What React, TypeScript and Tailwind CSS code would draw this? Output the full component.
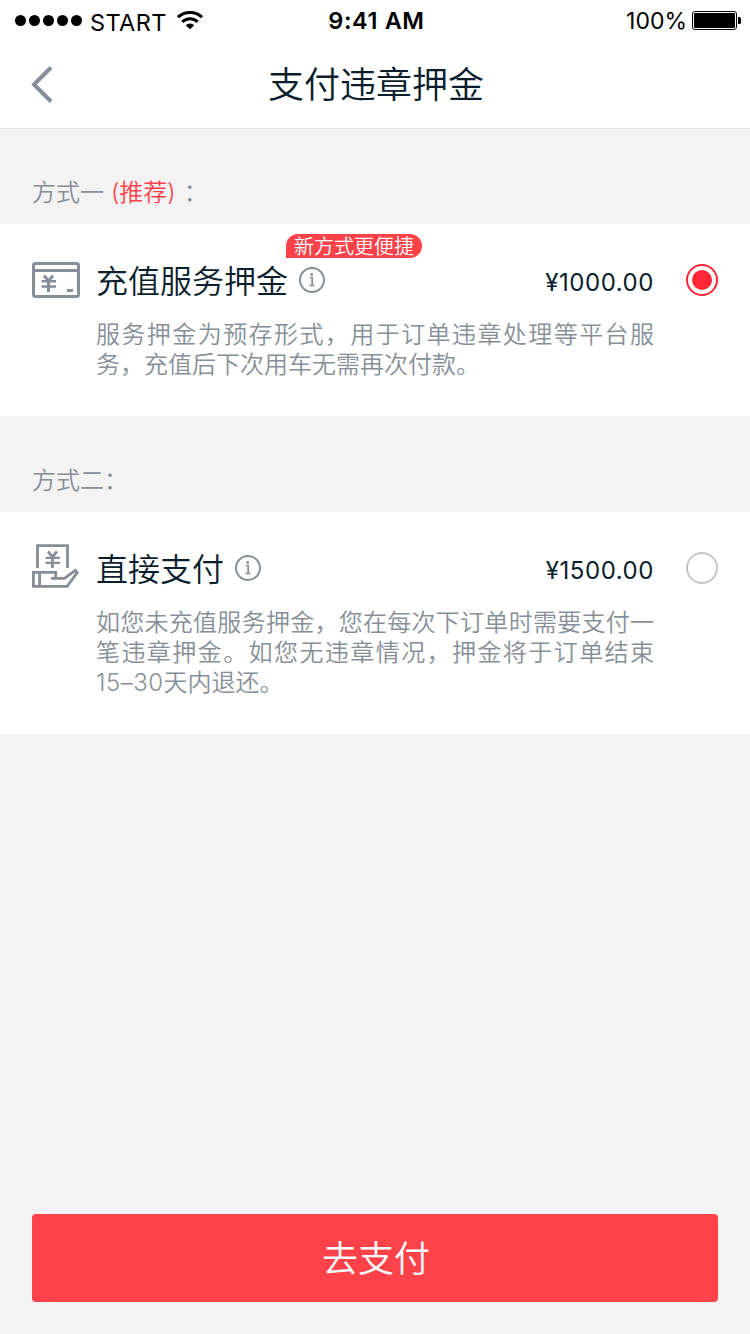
import type { ReactNode } from "react";

function StatusBar() {
  return (
    <div className="grid h-10 grid-cols-3 items-center text-2xl leading-6 text-black">
      <div className="flex items-center pl-[15px]">
        <svg width="67" height="11" viewBox="0 0 67 11" fill="currentColor">
          <circle cx="5.5" cy="5.5" r="5.5" />
          <circle cx="19.5" cy="5.5" r="5.5" />
          <circle cx="33.5" cy="5.5" r="5.5" />
          <circle cx="47.5" cy="5.5" r="5.5" />
          <circle cx="61.5" cy="5.5" r="5.5" />
        </svg>
        <span className="ml-2 w-[77px] pt-[6px] text-[23.5px] tracking-[0.4px]">START</span>
        <svg className="ml-[10px]" width="26" height="19" viewBox="0 0 26 19" fill="none" stroke="currentColor" strokeWidth="3">
          <path d="M1 6.2a17.500 17.500 0 0 1 24 0" />
          <path d="M5.300 10.900a11 11 0 0 1 15.400 0" />
          <path d="M8.700 14.200a6.200 6.200 0 0 1 8.600 0L13 18.300z" fill="currentColor" stroke="none" />
        </svg>
      </div>
      <div className="pt-px pl-[3px] text-center text-[23.5px] font-semibold tracking-[0.6px]">9:41 AM</div>
      <div className="flex items-center justify-end pr-[9px]">
        <span className="mr-[5px] pt-px text-[23px]">100%</span>
        <svg width="49" height="19" viewBox="0 0 49 19">
          <rect x="0.5" y="0.5" width="44" height="18" rx="2.5" fill="none" stroke="#000" />
          <rect x="2" y="2" width="41" height="15" rx="1" />
          <path d="M46 6h1.5q1.5 0 1.5 1.5v4q0 1.500-1.500 1.500H46z" />
        </svg>
      </div>
    </div>
  );
}

function CardIcon() {
  return (
    <svg width="48" height="48" viewBox="0 0 48 48" fill="none" stroke="#868f98" strokeWidth="3">
      <rect x="1.5" y="7.5" width="45" height="33" rx="2" />
      <path d="M2 14.500h44M16.500 25v11M35 34.500h6" />
      <path d="M12 19.500l4.500 5.500 4.500-5.500" />
      <path d="M9.500 25.300h14.500M9.500 30.500h14.500" strokeWidth="2.400" />
    </svg>
  );
}

function HandIcon() {
  return (
    <svg width="48" height="48" viewBox="0 0 48 48" fill="none" stroke="#868f98" strokeWidth="2.8">
      <path d="M5.500 24V1.700h30V24M20.500 14v10" />
      <path d="M16 7.500l4.500 5.500 4.500-5.500" />
      <path d="M13.500 13.800h14.500M13.500 18.900h14.500" strokeWidth="2.300" />
      <path d="M19 34.400h13.500L43.300 26.300 45.200 28.500 35.200 42.300H1.400V28.400h22.300v6M7.600 28.400v13.900" />
    </svg>
  );
}

function InfoIcon() {
  return (
    <svg className="ml-[11px] shrink-0" width="26" height="26" viewBox="0 0 26 26" fill="none" stroke="#868f98">
      <circle cx="13" cy="13" r="12" strokeWidth="2" />
      <path d="M10.800 10.500h2.400v8M10.500 18.500h5" strokeWidth="1.700" />
      <circle cx="12.700" cy="7.500" r="1.400" fill="#868f98" stroke="none" />
    </svg>
  );
}

type OptionProps = {
  icon: ReactNode;
  title: string;
  badge?: string;
  price: string;
  selected?: boolean;
  lines: string[];
  lastLine: ReactNode;
};

function Option({ icon, title, badge, price, selected, lines, lastLine }: OptionProps) {
  return (
    <section className="bg-white px-8 pt-8 pb-[36px]">
      <div className="flex h-12 items-center">
        {icon}
        <div className="relative ml-4 flex items-center">
          <h2 className="pt-1 text-[32px] leading-[44px] text-[#0a1e2d]">{title}</h2>
          <InfoIcon />
          {badge && (
            <span className="absolute -top-[22px] left-[190px] h-6 w-[136px] rounded-[12px] rounded-bl-none bg-[#ff424a] text-center text-xl leading-[26px] whitespace-nowrap text-white">
              {badge}
            </span>
          )}
        </div>
        <span className="ml-auto pt-[5px] text-[24px] font-normal tracking-[0.55px] text-[#0a1e2d]">{price}</span>
        {selected ? (
          <span className="ml-8 flex size-8 items-center justify-center rounded-full border-2 border-[#ff2733]">
            <span className="size-5 rounded-full bg-[#ff2733]" />
          </span>
        ) : (
          <span className="ml-8 size-8 rounded-full border-2 border-[#c3c7cb]" />
        )}
      </div>
      <div className="mt-4 ml-16 w-[558px] text-2xl leading-[30px] text-[#868f98]">
        {lines.map((line) => (
          <p key={line} className="whitespace-nowrap [text-align-last:justify]">{line}</p>
        ))}
        <p>{lastLine}</p>
      </div>
    </section>
  );
}

export default function App() {
  return (
    <div
      lang="zh-CN"
      className="flex h-[1334px] w-[750px] flex-col bg-[#f3f3f3] font-['Inter','Noto_Sans_CJK_SC',sans-serif] font-[350]"
    >
      <header className="h-[129px] border-b border-[#e5e5e5] bg-white font-normal">
        <StatusBar />
        <div className="grid h-[88px] grid-cols-[1fr_auto_1fr] items-center">
          <svg className="ml-[31px]" width="22" height="38" viewBox="0 0 22 38" fill="none" stroke="#868f98" strokeWidth="4">
            <path d="M20 2.500L3 19.500l17 17" />
          </svg>
          <h1 className="pt-px pl-[2px] text-4xl leading-[54px] font-[350] text-[#0a1e2d]">支付违章押金</h1>
        </div>
      </header>
      <div className="flex h-[95px] items-end px-8 pb-[13px] text-2xl leading-9 text-[#868f98]">
        <span>方式一</span>
        <span className="ml-[7px] text-[#ff424a]">(推荐)</span>
        <span className="ml-2">：</span>
      </div>
      <Option
        icon={<CardIcon />}
        title="充值服务押金"
        badge="新方式更便捷"
        price="¥1000.00"
        selected
        lines={["服务押金为预存形式，用于订单违章处理等平台服"]}
        lastLine="务，充值后下次用车无需再次付款。"
      />
      <div className="flex h-24 items-end px-8 pb-[13px] text-2xl leading-9 text-[#868f98]">
        <span>方式二：</span>
      </div>
      <Option
        icon={<HandIcon />}
        title="直接支付"
        price="¥1500.00"
        lines={["如您未充值服务押金，您在每次下订单时需要支付一", "笔违章押金。如您无违章情况，押金将于订单结束"]}
        lastLine={
          <>
            <span className="tracking-[0.5px]">15–30</span>天内退还。
          </>
        }
      />
      <button className="mx-8 mt-auto mb-8 h-[88px] shrink-0 rounded bg-[#ff424a] pt-[2px] pl-[2px] text-4xl font-[350] text-white">
        去支付
      </button>
    </div>
  );
}
